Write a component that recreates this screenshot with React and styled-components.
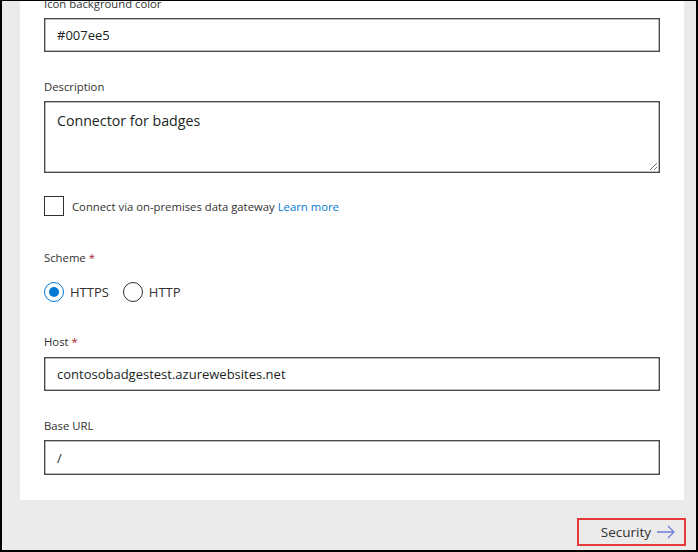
import React from "react";
import styled, { createGlobalStyle } from "styled-components";

const Global = createGlobalStyle`
  html, body { margin: 0; padding: 0; background: #000; }
  body { font-family: "Open Sans", "Noto Sans", sans-serif; }
  * { box-sizing: border-box; }
`;

const Frame = styled.div`
  width: 698px;
  height: 552px;
  background: #000;
  padding: 1px 2px 2px 2px;
`;

const Screen = styled.div`
  width: 100%;
  height: 100%;
  background: #ebebeb;
  display: flex;
  flex-direction: column;
  padding-left: 18px;
  padding-right: 12px;
  overflow: hidden;
`;

const Panel = styled.div`
  background: #fff;
  height: 499px;
  overflow: hidden;
  padding: 0 24px 0 24px;
`;

const Form = styled.div`
  margin-top: -5px;
  display: flex;
  flex-direction: column;
  width: 616px;
`;

const Label = styled.div`
  font-size: 11.3px;
  line-height: 16px;
  color: #323130;
  margin-top: ${(p) => p.$mt || 0}px;
  margin-bottom: ${(p) => (p.$mb == null ? 6 : p.$mb)}px;
`;

const Req = styled.span`
  color: #a4262c;
  margin-left: 3px;
`;

const TextBox = styled.div`
  height: ${(p) => p.$h || 34}px;
  border: 1px solid #4a4a4a;
  box-shadow: inset 0 0 0 0.5px #7a7a7a;
  padding: ${(p) => (p.$multi ? "9px 12px" : "0 12px")};
  display: flex;
  align-items: ${(p) => (p.$multi ? "flex-start" : "center")};
  font-size: ${(p) => (p.$multi ? 14.2 : 13)}px;
  color: #201f1e;
  position: relative;
`;

const Grip = styled.svg`
  position: absolute;
  right: 1px;
  bottom: 1px;
`;

const CheckRow = styled.div`
  display: flex;
  align-items: center;
  margin-top: 23px;
  gap: 8px;
  font-size: 11.3px;
  color: #323130;
`;

const CheckBox = styled.span`
  width: 20px;
  height: 20px;
  border: 1px solid #323130;
  background: #fff;
`;

const Link = styled.a`
  color: #0078d4;
  text-decoration: none;
  margin-left: 3px;
`;

const RadioGroup = styled.div`
  display: flex;
  align-items: center;
  gap: 14px;
  margin-top: 16px;
  height: 20px;
`;

const RadioItem = styled.label`
  display: flex;
  align-items: center;
  gap: 6px;
  font-size: 13px;
  color: #323130;
`;

const RadioCircle = styled.span`
  width: 20px;
  height: 20px;
  border-radius: 50%;
  border: 1px solid ${(p) => (p.$on ? "#0078d4" : "#323130")};
  display: flex;
  align-items: center;
  justify-content: center;
  &::after {
    content: "";
    width: 10px;
    height: 10px;
    border-radius: 50%;
    background: ${(p) => (p.$on ? "#0078d4" : "transparent")};
  }
`;

const Footer = styled.div`
  display: flex;
  justify-content: flex-end;
  padding-top: 18px;
  margin-right: -2px;
`;

const NextButton = styled.button`
  width: 109px;
  height: 28px;
  border: 2px solid #e5393c;
  background: #ebebeb;
  display: flex;
  align-items: center;
  justify-content: flex-end;
  gap: 5px;
  padding: 0 8px 0 0;
  font-family: inherit;
  font-size: 13.5px;
  color: #323130;
  cursor: pointer;
`;

export default function App() {
  return (
    <>
      <Global />
      <Frame>
        <Screen>
          <Panel>
            <Form>
              <Label>Icon background color</Label>
              <TextBox>#007ee5</TextBox>

              <Label $mt={27}>Description</Label>
              <TextBox $h={72} $multi>
                Connector for badges
                <Grip width="10" height="10" viewBox="0 0 10 10">
                  <path d="M9 2 L2 9 M9 6 L6 9" stroke="#777" strokeWidth="1" fill="none" />
                </Grip>
              </TextBox>

              <CheckRow>
                <CheckBox />
                <span>
                  Connect via on-premises data gateway
                  <Link href="#">Learn more</Link>
                </span>
              </CheckRow>

              <Label $mt={34} $mb={0}>
                Scheme<Req>*</Req>
              </Label>
              <RadioGroup>
                <RadioItem>
                  <RadioCircle $on />
                  HTTPS
                </RadioItem>
                <RadioItem>
                  <RadioCircle />
                  HTTP
                </RadioItem>
              </RadioGroup>

              <Label $mt={32} $mb={7}>
                Host<Req>*</Req>
              </Label>
              <TextBox>contosobadgestest.azurewebsites.net</TextBox>

              <Label $mt={27}>Base URL</Label>
              <TextBox $h={35}>/</TextBox>
            </Form>
          </Panel>
          <Footer>
            <NextButton>
              Security
              <svg width="20" height="14" viewBox="0 0 20 14">
                <path d="M1 7 H18 M12 1 L18 7 L12 13" stroke="#6f7fd6" strokeWidth="1.3" fill="none" />
              </svg>
            </NextButton>
          </Footer>
        </Screen>
      </Frame>
    </>
  );
}
